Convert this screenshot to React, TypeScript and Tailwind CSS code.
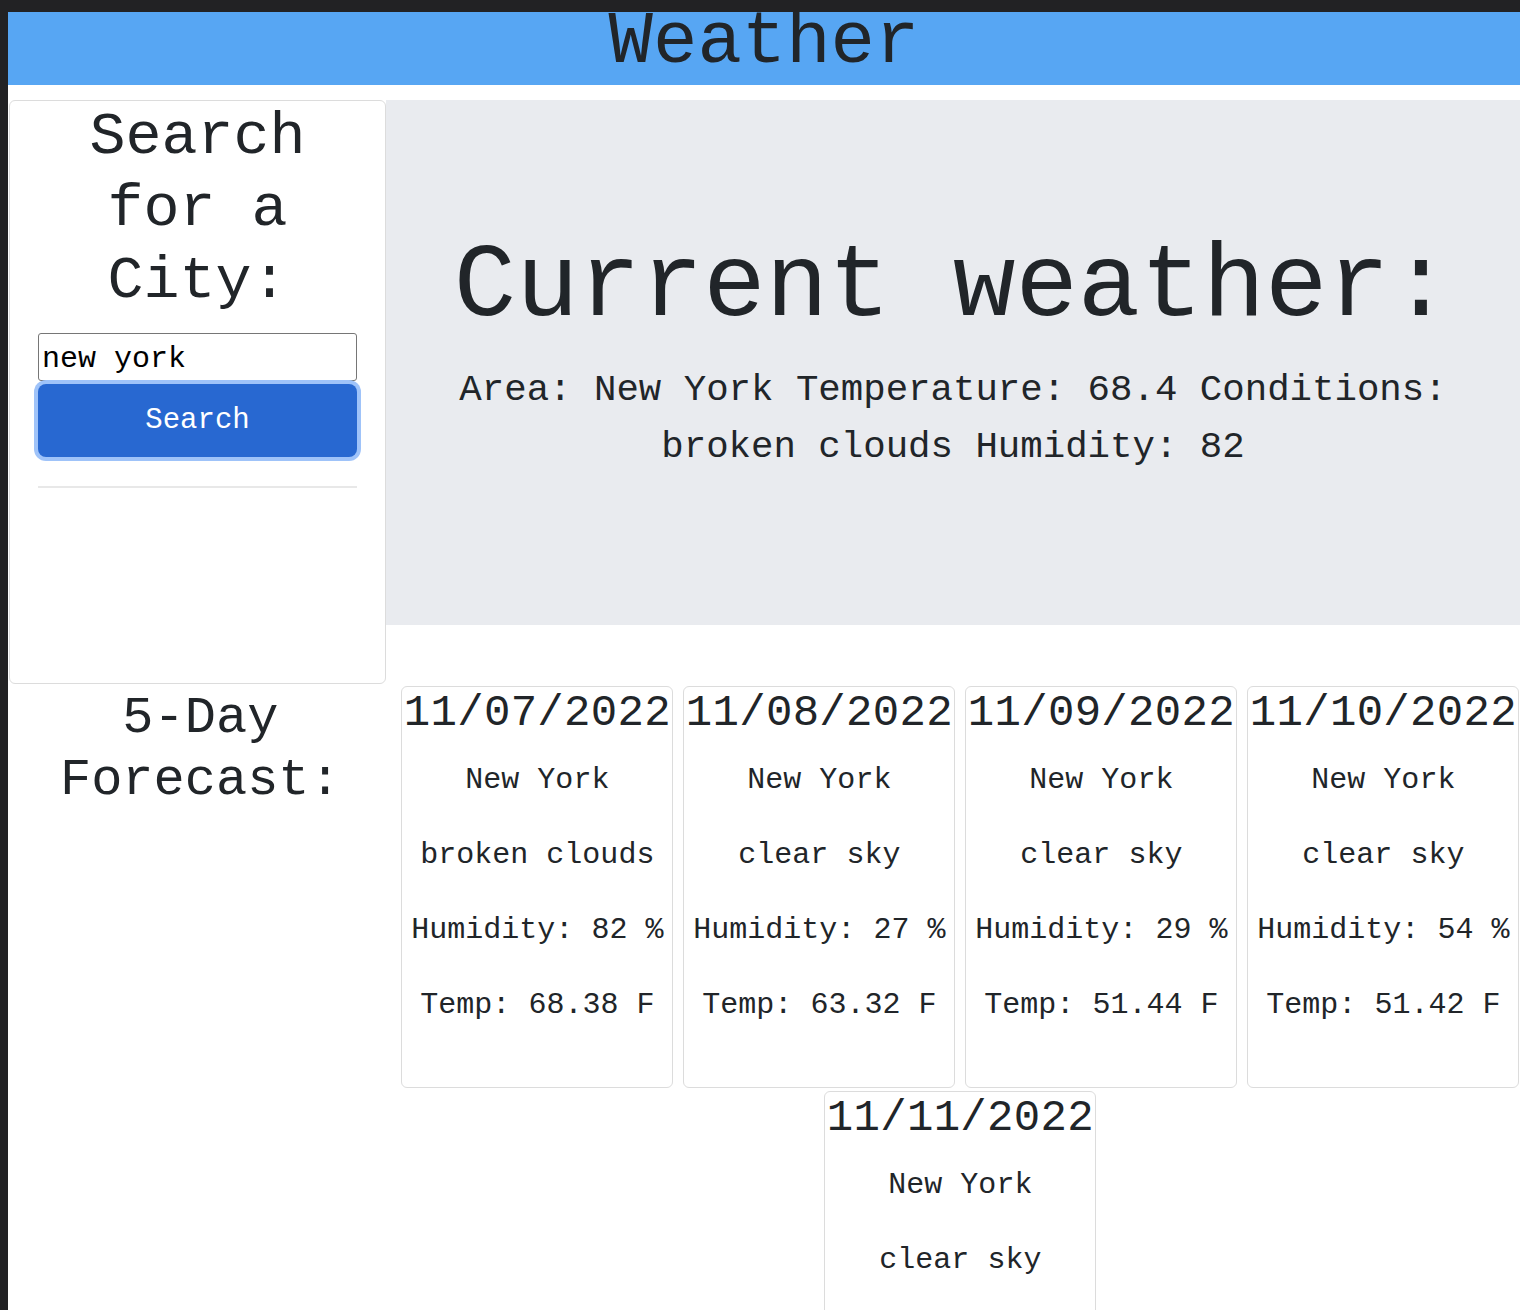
import React from 'react';

const mono = { fontFamily: '"Liberation Mono", "Courier New", monospace' };

const forecast = [
  { date: '11/07/2022', desc: 'broken clouds', humidity: 82, temp: '68.38' },
  { date: '11/08/2022', desc: 'clear sky', humidity: 27, temp: '63.32' },
  { date: '11/09/2022', desc: 'clear sky', humidity: 29, temp: '51.44' },
  { date: '11/10/2022', desc: 'clear sky', humidity: 54, temp: '51.42' },
  { date: '11/11/2022', desc: 'clear sky', humidity: 61, temp: '49.87' },
];

const ForecastCard: React.FC<{ day: (typeof forecast)[number] }> = ({ day }) => (
  <div className="w-[272px] border border-[#dcdcdc] rounded-[6px] text-center pb-[29px]">
    <h3 className="text-[44px] leading-[53px] mb-[18px] tracking-[0.3px]">{day.date}</h3>
    <p className="text-[30px] leading-[45px] mb-[30px]">New York</p>
    <p className="text-[30px] leading-[45px] mb-[30px]">{day.desc}</p>
    <p className="text-[30px] leading-[45px] mb-[30px]">Humidity: {day.humidity} %</p>
    <p className="text-[30px] leading-[45px] mb-[30px]">Temp: {day.temp} F</p>
  </div>
);

export default function App() {
  return (
    <div className="min-h-screen bg-[#222224] pt-[12px] pl-[8px]" style={mono}>
      <div className="bg-white min-h-[1298px] text-[#212529] overflow-hidden">
        <header className="h-[73px] bg-[#57a6f3] text-center">
          <h1 className="text-[74px] leading-[60px] text-[#212529]">Weather</h1>
        </header>

        <div className="flex mt-[15px]">
          <div className="ml-[1px] w-[377px] h-[584px] border border-[#dcdcdc] rounded-[6px] px-[28px]">
            <h2 className="text-[60px] leading-[72px] text-center">Search for a City:</h2>
            <input
              readOnly
              value="new york"
              className="mt-[16px] w-full h-[48px] border border-[#767676] rounded-[3px] px-[3px] pt-[4px] text-[30px] text-black outline-none"
              style={mono}
            />
            <button
              className="mt-[3px] w-full h-[73px] rounded-[8px] bg-[#2868d1] text-white text-[29px] ring-4 ring-[#9fc3f9]"
              style={mono}
            >
              Search
            </button>
            <hr className="mt-[29px] border-t-2 border-[#e8e8e8]" />
          </div>

          <div className="flex-1 h-[525px] bg-[#e9ebef] px-[40px] pt-[125px] text-center">
            <h2 className="text-[104px] leading-[125px]">Current weather:</h2>
            <p className="mt-[12px] text-[37.4px] leading-[57px]">
              Area: New York Temperature: 68.4 Conditions: broken clouds Humidity: 82
            </p>
          </div>
        </div>

        <div className="flex mt-[2px]">
          <div className="ml-[1px] w-[377px] pt-[2px]">
            <h2 className="text-[52px] leading-[62px] text-center pl-[6px]">5-Day Forecast:</h2>
          </div>
          <div className="ml-[15px] w-[1120px] flex flex-wrap justify-center gap-x-[10px] gap-y-[3px]">
            {forecast.map((day) => (
              <ForecastCard key={day.date} day={day} />
            ))}
          </div>
        </div>
      </div>
    </div>
  );
}
